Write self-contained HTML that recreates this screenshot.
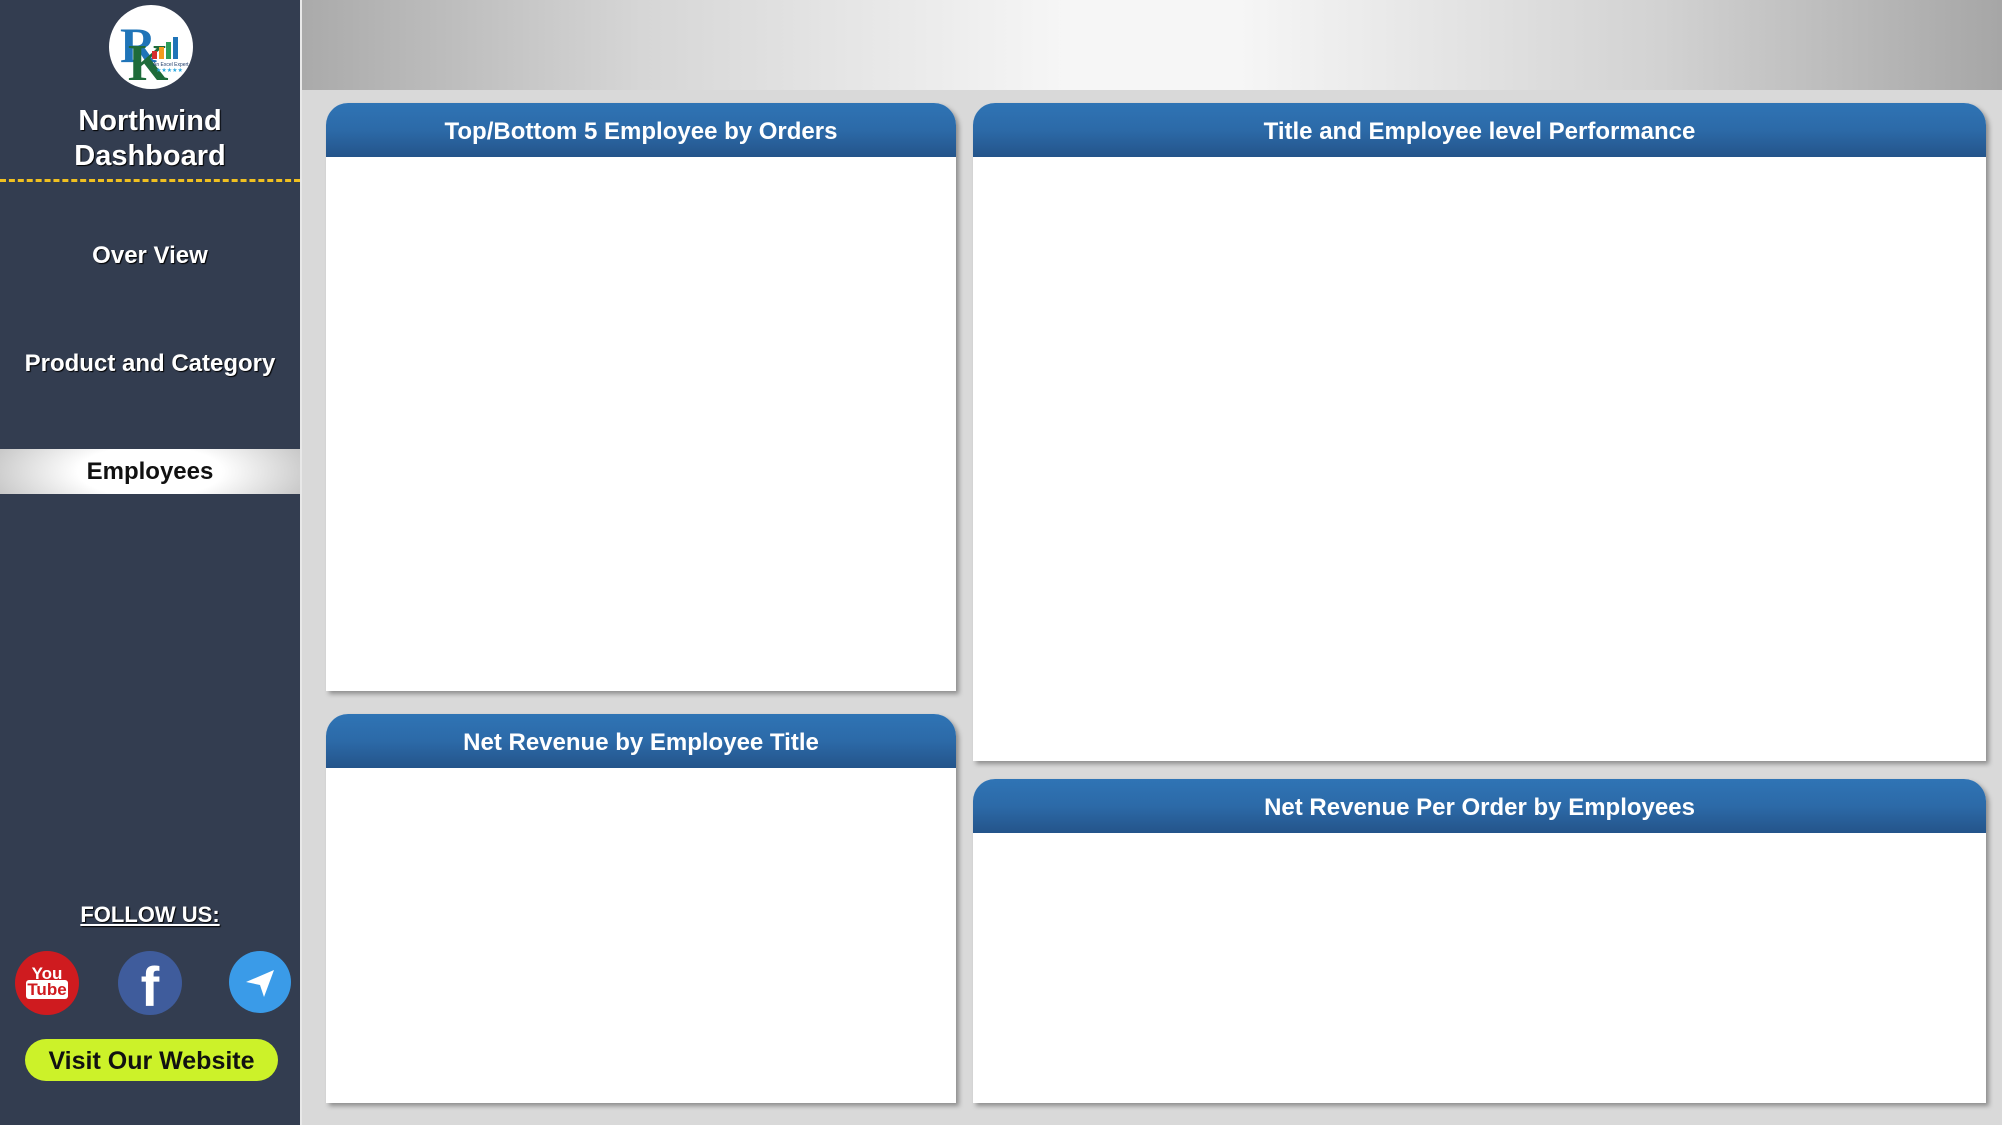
<!DOCTYPE html>
<html><head><meta charset="utf-8"><style>
*{margin:0;padding:0;box-sizing:border-box}
body{width:2002px;height:1125px;overflow:hidden;background:#d9d9d9;font-family:"Liberation Sans",Arial,sans-serif;position:relative}
.side{position:absolute;left:0;top:0;width:302px;height:1125px;background:#333d50;border-right:2px solid #e8e8e8}
.banner{position:absolute;left:302px;top:0;width:1700px;height:90px;background:linear-gradient(90deg,#aaa 0%,#d6d6d6 20%,#f6f6f6 45%,#f6f6f6 55%,#d2d2d2 80%,#a6a6a6 100%)}
.title{position:absolute;left:0;width:300px;text-align:center;color:#fff;font-weight:bold;font-size:29px;line-height:35px;top:104px;text-shadow:1px 1px 1px #000}
.dash{position:absolute;left:0;top:179px;width:300px;border-top:3px dashed #f0c020}
.nav{position:absolute;left:0;width:300px;text-align:center;color:#fff;font-weight:bold;font-size:24px;text-shadow:1px 1px 1px #000}
.sel{top:449px;height:45px;line-height:45px;color:#111;text-shadow:none;background:radial-gradient(ellipse 60% 140% at 50% 50%,#fff 40%,#bdbdbd 100%)}
.panel{position:absolute;background:#fff;box-shadow:3px 3px 5px rgba(0,0,0,.35);border-radius:22px 22px 0 0;overflow:hidden}
.panel .h{height:54px;background:linear-gradient(#2f74b5,#2c6aa8 50%,#24548a);color:#fff;font-weight:bold;font-size:24px;text-align:center;line-height:58px}
.circ{position:absolute;width:64px;height:64px;border-radius:50%;top:951px}
</style></head><body>
<div class="side">
 <svg style="position:absolute;left:108px;top:4px" width="86" height="86" viewBox="0 0 86 86">
  <circle cx="43" cy="43" r="42" fill="#fff"/>
  <text x="12" y="58" font-family="Liberation Serif" font-weight="bold" font-size="50" fill="#1f74b8">R</text>
  <text x="20" y="76" font-family="Liberation Serif" font-weight="bold" font-size="52" fill="#1e6b3a">K</text>
  <rect x="44" y="47" width="5" height="8" fill="#d62e2e"/><rect x="51" y="43" width="5" height="12" fill="#f39a1e"/><rect x="58" y="38" width="5" height="17" fill="#2a9c5a"/><rect x="65" y="33" width="5" height="22" fill="#1f74b8"/>
  <text x="45" y="62" font-size="5" fill="#1e3b6a">An Excel Expert</text>
  <text x="48" y="68" font-size="6" fill="#2aa8e0">★★★★★</text>
 </svg>
 <div class="title">Northwind<br>Dashboard</div>
 <div class="dash"></div>
 <div class="nav" style="top:242px">Over View</div>
 <div class="nav" style="top:350px">Product and Category</div>
 <div class="nav sel">Employees</div>
 <div class="nav" style="top:902px;font-size:22px;text-decoration:underline">FOLLOW US:</div>
 <div class="circ" style="left:15px;background:#cf1b1f"><div style="color:#fff;font-weight:bold;font-size:17px;line-height:16px;text-align:center;margin-top:15px;font-family:'Liberation Sans Narrow','Liberation Sans',sans-serif">You<br><span style="background:#fff;color:#cf1b1f;border-radius:3px;padding:0 1px">Tube</span></div></div>
 <div class="circ" style="left:118px;background:#3f5c9c"><div style="color:#fff;font-weight:bold;font-size:56px;text-align:center;line-height:64px;margin-top:4px">f</div></div>
 <div class="circ" style="left:229px;width:62px;height:62px;background:#3a9be8"><svg width="62" height="62" viewBox="0 0 62 62"><path d="M17 31 L45 19 L35 46 L31 34 Z" fill="#fff"/></svg></div>
 <div style="position:absolute;left:25px;top:1039px;width:253px;height:42px;border-radius:21px;background:#ccf229;color:#111;font-weight:bold;font-size:25px;text-align:center;line-height:44px">Visit Our Website</div>
</div>
<div class="banner"></div>
<div class="panel" style="left:326px;top:103px;width:630px;height:588px"><div class="h">Top/Bottom 5 Employee by Orders</div></div>
<div class="panel" style="left:973px;top:103px;width:1013px;height:658px"><div class="h">Title and Employee level Performance</div></div>
<div class="panel" style="left:326px;top:714px;width:630px;height:389px"><div class="h">Net Revenue by Employee Title</div></div>
<div class="panel" style="left:973px;top:779px;width:1013px;height:324px"><div class="h">Net Revenue Per Order by Employees</div></div>
</body></html>
